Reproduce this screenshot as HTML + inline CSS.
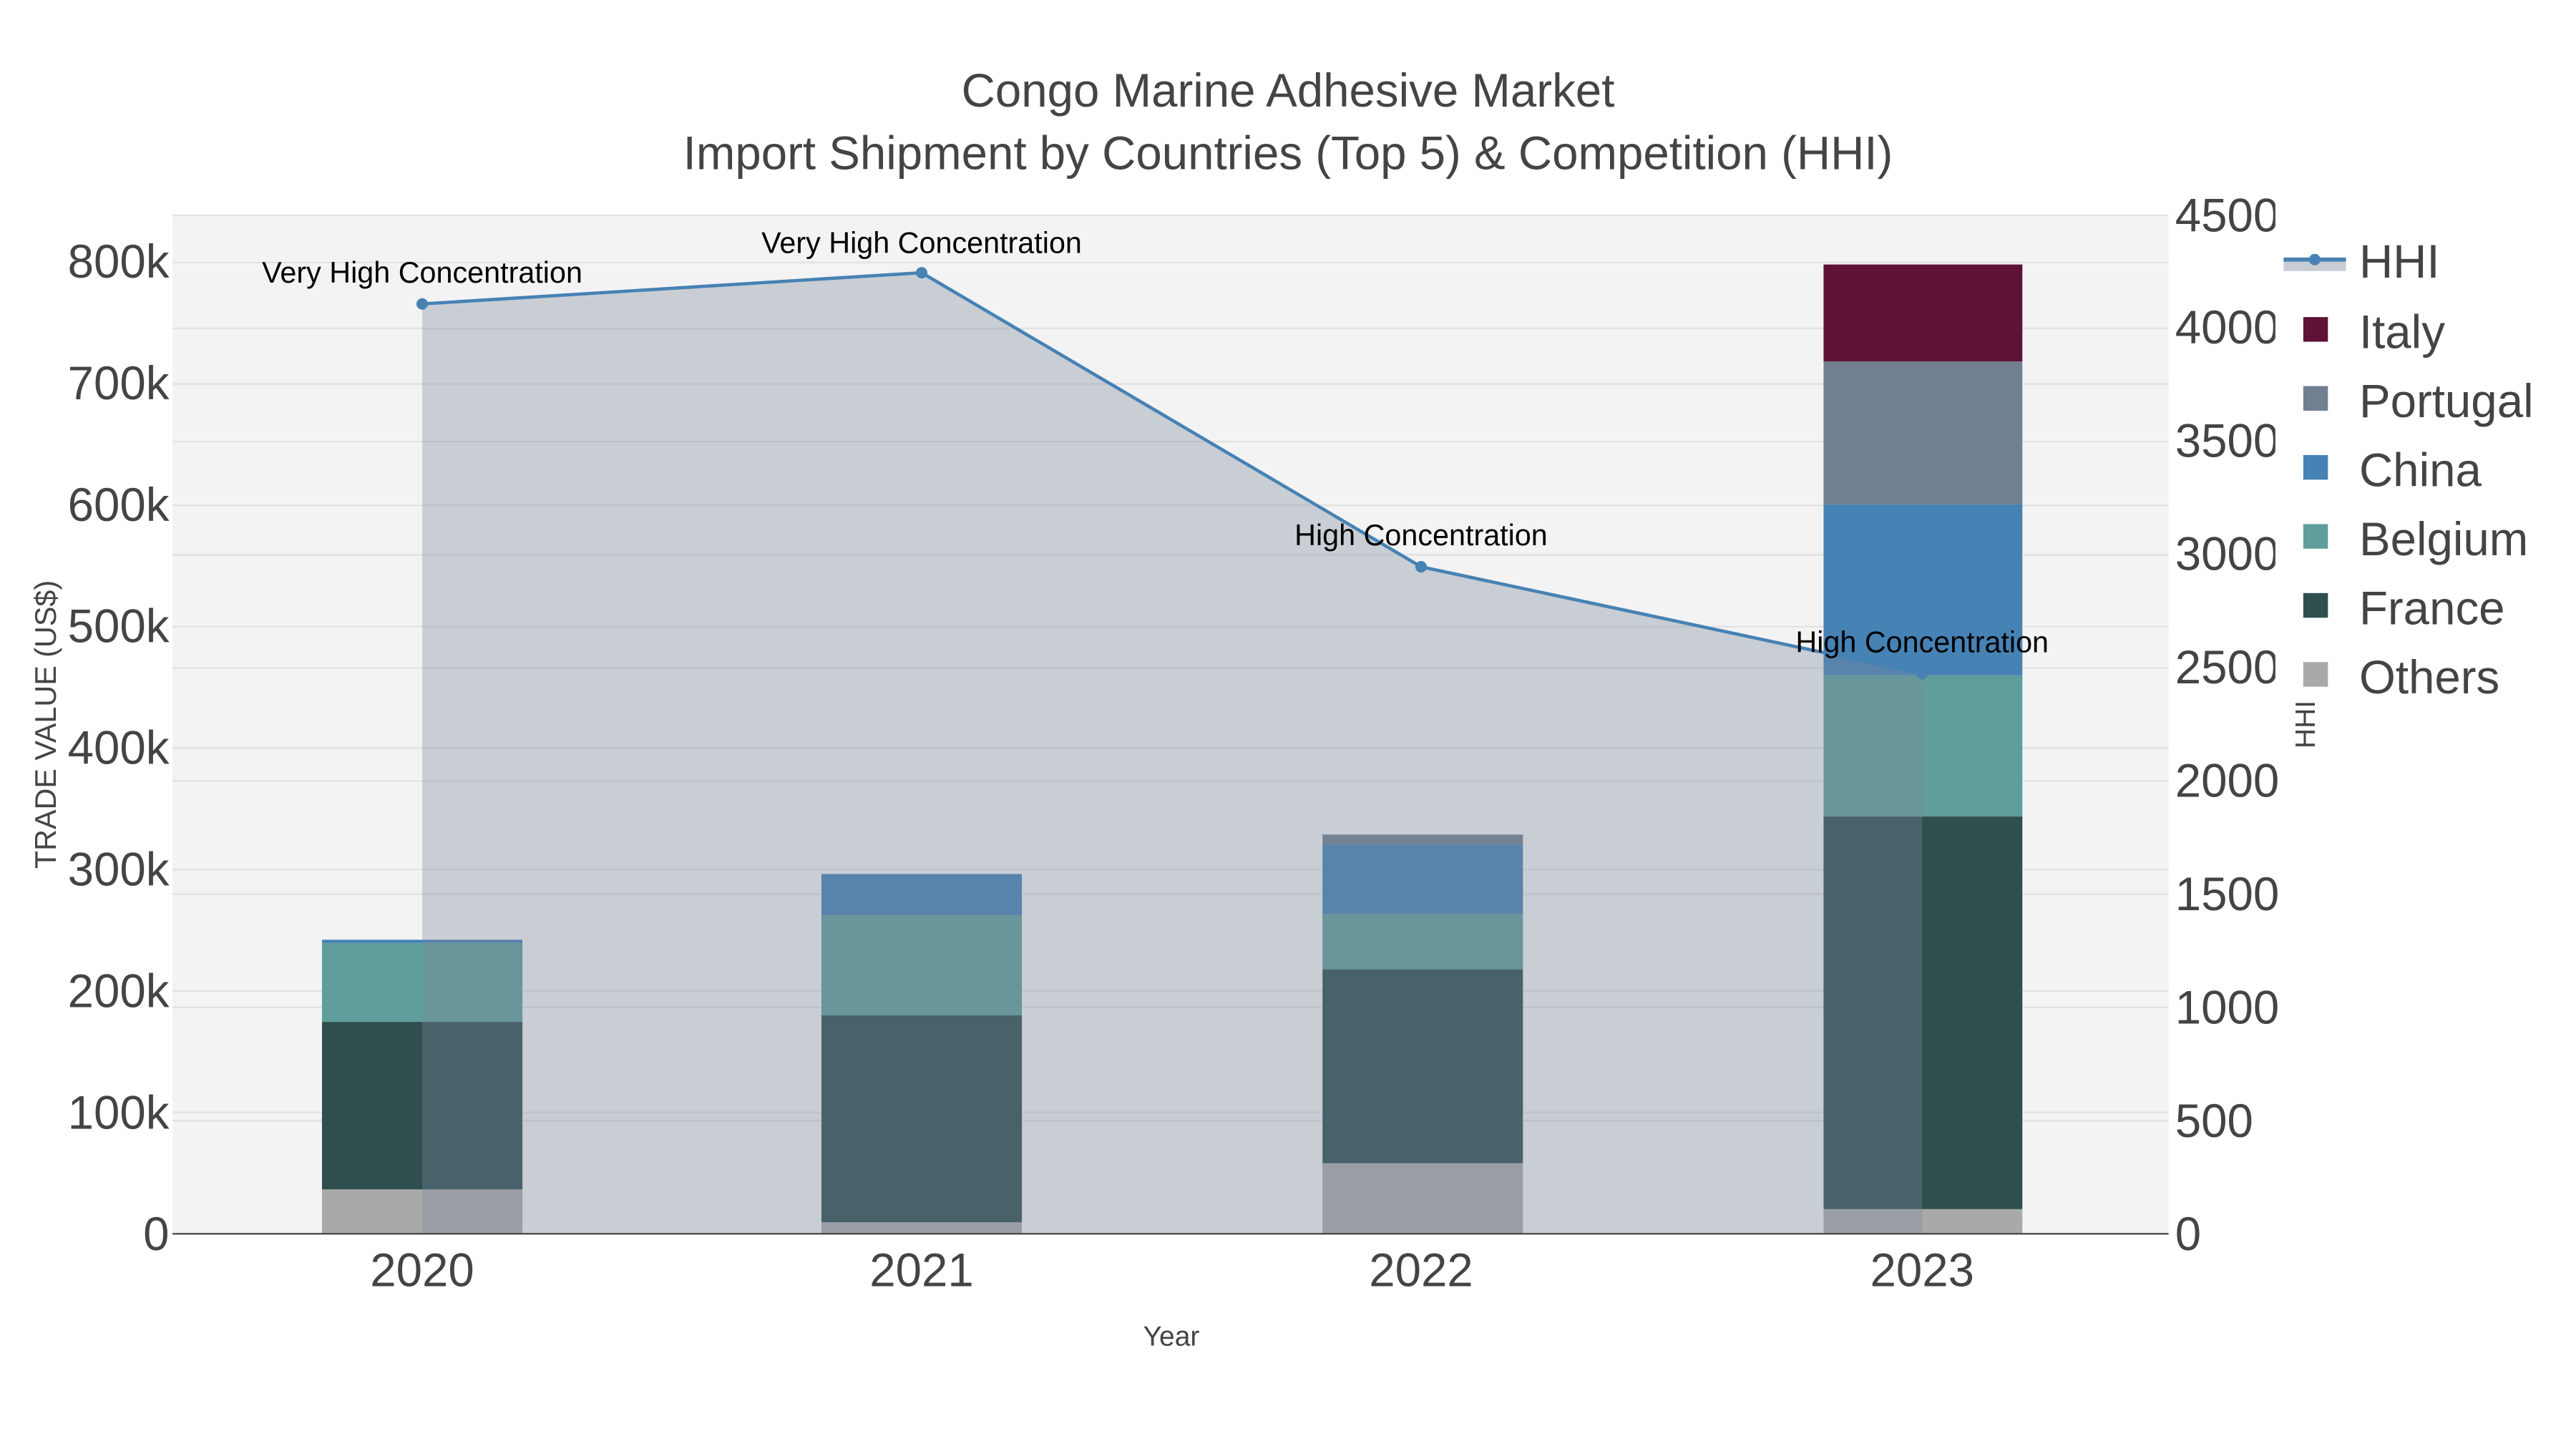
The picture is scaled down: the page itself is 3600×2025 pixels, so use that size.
<!DOCTYPE html>
<html><head><meta charset="utf-8"><style>
html,body{margin:0;padding:0;background:#fff;}
svg{display:block;}
text{font-family:"Liberation Sans",sans-serif;}
</style></head><body>
<svg width="3600" height="2025" viewBox="0 0 1568 882" xmlns="http://www.w3.org/2000/svg">
<rect width="1568" height="882" fill="#fff"/>
<rect x="105" y="131" width="1215" height="620" fill="#f3f3f3"/>
<g stroke="#e2e2e2" stroke-width="1">
<line x1="105" x2="1320" y1="677.1" y2="677.1"/><line x1="105" x2="1320" y1="603.2" y2="603.2"/>
<line x1="105" x2="1320" y1="529.3" y2="529.3"/><line x1="105" x2="1320" y1="455.4" y2="455.4"/>
<line x1="105" x2="1320" y1="381.5" y2="381.5"/><line x1="105" x2="1320" y1="307.6" y2="307.6"/>
<line x1="105" x2="1320" y1="233.7" y2="233.7"/><line x1="105" x2="1320" y1="159.8" y2="159.8"/>
<line x1="105" x2="1320" y1="682.1" y2="682.1"/><line x1="105" x2="1320" y1="613.2" y2="613.2"/>
<line x1="105" x2="1320" y1="544.3" y2="544.3"/><line x1="105" x2="1320" y1="475.4" y2="475.4"/>
<line x1="105" x2="1320" y1="406.6" y2="406.6"/><line x1="105" x2="1320" y1="337.7" y2="337.7"/>
<line x1="105" x2="1320" y1="268.8" y2="268.8"/><line x1="105" x2="1320" y1="199.9" y2="199.9"/>
<line x1="105" x2="1320" y1="131" y2="131"/>
</g>
<g>
<rect x="196" y="724" width="122" height="27" fill="#a9a9a9"/>
<rect x="196" y="622" width="122" height="102" fill="#2f4f4f"/>
<rect x="196" y="574" width="122" height="48" fill="#5f9e9a"/>
<rect x="196" y="572" width="122" height="2" fill="#4682b4"/>

<rect x="500" y="744" width="122" height="7" fill="#a9a9a9"/>
<rect x="500" y="618" width="122" height="126" fill="#2f4f4f"/>
<rect x="500" y="557" width="122" height="61" fill="#5f9e9a"/>
<rect x="500" y="532" width="122" height="25" fill="#4682b4"/>

<rect x="805" y="708" width="122" height="43" fill="#a9a9a9"/>
<rect x="805" y="590" width="122" height="118" fill="#2f4f4f"/>
<rect x="805" y="556" width="122" height="34" fill="#5f9e9a"/>
<rect x="805" y="514" width="122" height="42" fill="#4682b4"/>
<rect x="805" y="508" width="122" height="6" fill="#708090"/>

<rect x="1110" y="736" width="121" height="15" fill="#a9a9a9"/>
<rect x="1110" y="497" width="121" height="239" fill="#2f4f4f"/>
<rect x="1110" y="411" width="121" height="86" fill="#5f9e9a"/>
<rect x="1110" y="307" width="121" height="104" fill="#4682b4"/>
<rect x="1110" y="220" width="121" height="87" fill="#708090"/>
<rect x="1110" y="161" width="121" height="59" fill="#601236"/>
</g>
<polygon points="257,185 561,166 865,345 1170,410 1170,751 257,751" fill="#7a869c" fill-opacity="0.35"/>
<polyline points="257,185 561,166 865,345 1170,410" fill="none" stroke="#4682b4" stroke-width="2"/>
<g fill="#4682b4"><circle cx="257" cy="185" r="3.5"/><circle cx="561" cy="166" r="3.5"/><circle cx="865" cy="345" r="3.5"/><circle cx="1170" cy="410" r="3.5"/></g>
<line x1="105" x2="1320" y1="751" y2="751" stroke="#444" stroke-width="1"/>
<g font-size="18" fill="#000" text-anchor="middle">
<text x="257" y="172">Very High Concentration</text>
<text x="561" y="154">Very High Concentration</text>
<text x="865" y="332">High Concentration</text>
<text x="1170" y="397">High Concentration</text>
</g>
<g font-size="28.5" fill="#444" text-anchor="end">
<text x="103" y="761">0</text><text x="103" y="687">100k</text><text x="103" y="613">200k</text>
<text x="103" y="539">300k</text><text x="103" y="465">400k</text><text x="103" y="391">500k</text>
<text x="103" y="317">600k</text><text x="103" y="243">700k</text><text x="103" y="169">800k</text>
</g>
<g font-size="28.5" fill="#444">
<text x="1324" y="761">0</text><text x="1324" y="692">500</text><text x="1324" y="623">1000</text>
<text x="1324" y="554">1500</text><text x="1324" y="485">2000</text><text x="1324" y="416">2500</text>
<text x="1324" y="347">3000</text><text x="1324" y="278">3500</text><text x="1324" y="209">4000</text>
<text x="1324" y="141">4500</text>
</g>
<g font-size="28.5" fill="#444" text-anchor="middle">
<text x="257" y="783">2020</text><text x="561" y="783">2021</text><text x="865" y="783">2022</text><text x="1170" y="783">2023</text>
</g>
<text x="713" y="819" font-size="17" fill="#444" text-anchor="middle">Year</text>
<text transform="translate(34,441) rotate(-90)" font-size="18" fill="#444" text-anchor="middle">TRADE VALUE (US$)</text>
<g font-size="28.5" fill="#444" text-anchor="middle">
<text x="784" y="65">Congo Marine Adhesive Market</text>
<text x="784" y="103">Import Shipment by Countries (Top 5) &amp; Competition (HHI)</text>
</g>
<rect x="1385" y="120" width="183" height="310" fill="#fff"/>
<text transform="translate(1409,441) rotate(-90)" font-size="17" fill="#444" text-anchor="middle">HHI</text>
<rect x="1390" y="159" width="38" height="6" fill="#c8ccd3"/>
<line x1="1390" x2="1428" y1="158" y2="158" stroke="#4682b4" stroke-width="2.5"/>
<circle cx="1409" cy="158" r="3.5" fill="#4682b4"/>
<rect x="1402" y="193" width="15" height="15" fill="#601236"/>
<rect x="1402" y="235" width="15" height="15" fill="#708090"/>
<rect x="1402" y="277" width="15" height="15" fill="#4682b4"/>
<rect x="1402" y="319" width="15" height="15" fill="#5f9e9a"/>
<rect x="1402" y="361" width="15" height="15" fill="#2f4f4f"/>
<rect x="1402" y="403" width="15" height="15" fill="#a9a9a9"/>
<g font-size="28.5" fill="#444">
<text x="1436" y="169">HHI</text><text x="1436" y="212">Italy</text><text x="1436" y="254">Portugal</text>
<text x="1436" y="296">China</text><text x="1436" y="338">Belgium</text><text x="1436" y="380">France</text>
<text x="1436" y="422">Others</text>
</g>
</svg>
</body></html>
